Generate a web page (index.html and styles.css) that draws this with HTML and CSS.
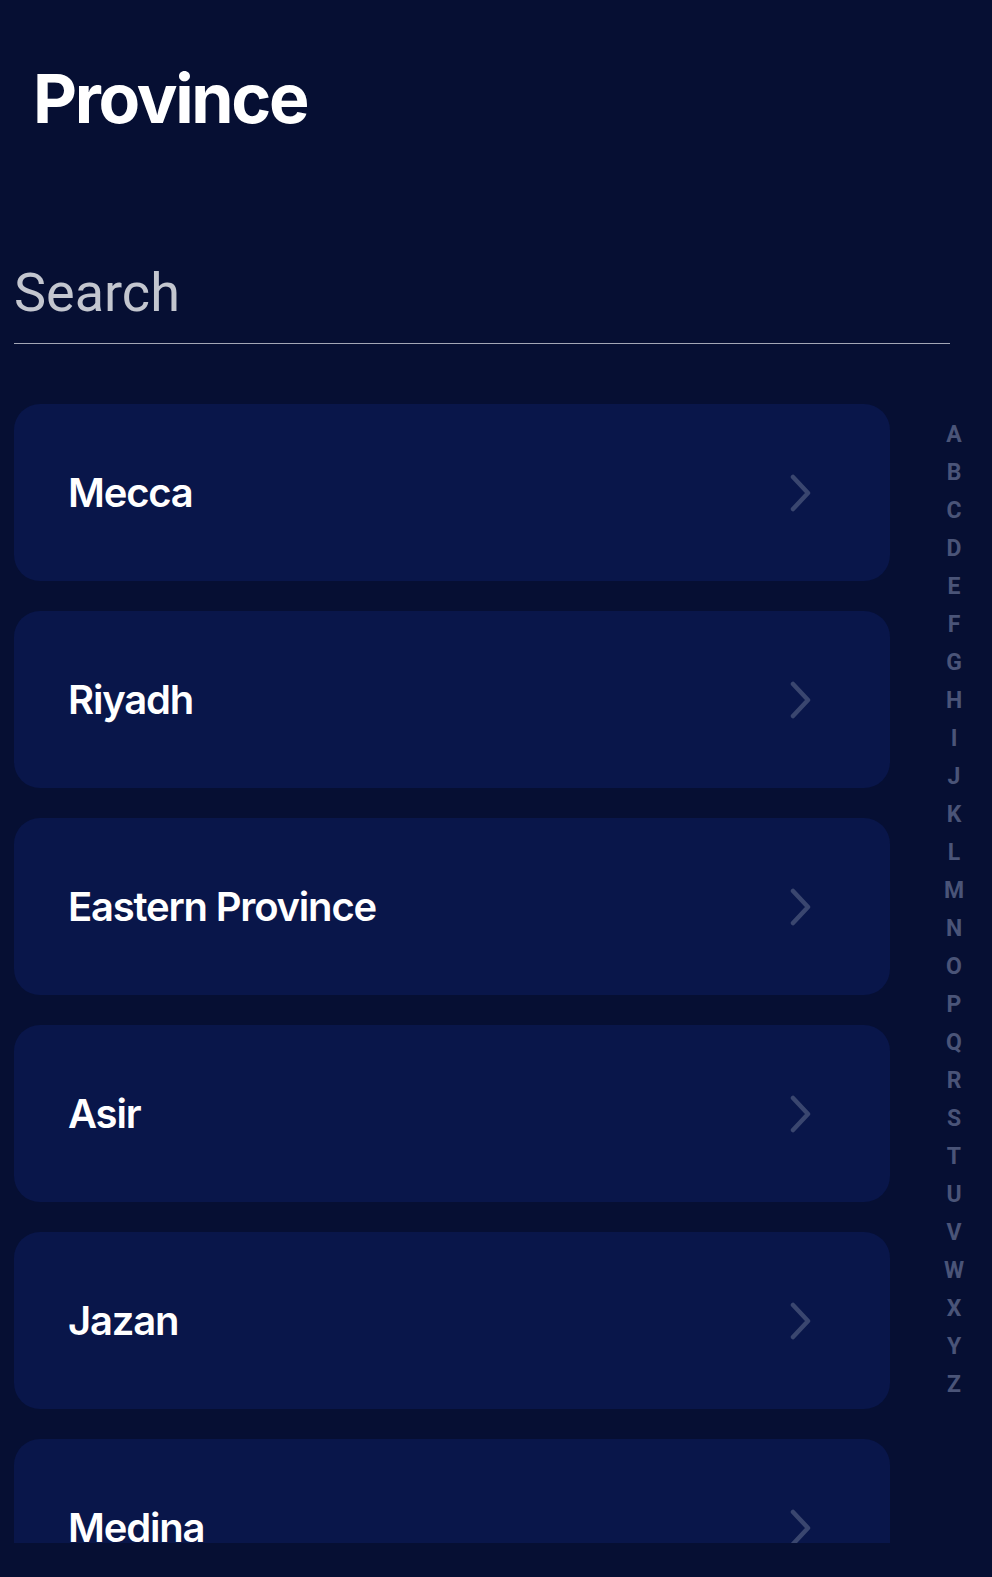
FILE: index.html
```html
<!DOCTYPE html>
<html lang="en">
<head>
<meta charset="utf-8">
<title>Province</title>
<link rel="stylesheet" href="styles.css">
</head>
<body>
<div class="page">
  <h1 class="title">Province</h1>
  <div class="search"><span class="search-placeholder">Search</span></div>
  <div class="content">
    <div class="list">
      <div class="card"><span class="card-name">Mecca</span><svg class="chev" width="24" height="38" viewBox="0 0 24 38"><path d="M4 3 L19 19 L4 35" fill="none" stroke="#3a466f" stroke-width="4.5" stroke-linecap="round" stroke-linejoin="round"/></svg></div>
      <div class="card"><span class="card-name">Riyadh</span><svg class="chev" width="24" height="38" viewBox="0 0 24 38"><path d="M4 3 L19 19 L4 35" fill="none" stroke="#3a466f" stroke-width="4.5" stroke-linecap="round" stroke-linejoin="round"/></svg></div>
      <div class="card"><span class="card-name">Eastern Province</span><svg class="chev" width="24" height="38" viewBox="0 0 24 38"><path d="M4 3 L19 19 L4 35" fill="none" stroke="#3a466f" stroke-width="4.5" stroke-linecap="round" stroke-linejoin="round"/></svg></div>
      <div class="card"><span class="card-name">Asir</span><svg class="chev" width="24" height="38" viewBox="0 0 24 38"><path d="M4 3 L19 19 L4 35" fill="none" stroke="#3a466f" stroke-width="4.5" stroke-linecap="round" stroke-linejoin="round"/></svg></div>
      <div class="card"><span class="card-name">Jazan</span><svg class="chev" width="24" height="38" viewBox="0 0 24 38"><path d="M4 3 L19 19 L4 35" fill="none" stroke="#3a466f" stroke-width="4.5" stroke-linecap="round" stroke-linejoin="round"/></svg></div>
      <div class="card"><span class="card-name">Medina</span><svg class="chev" width="24" height="38" viewBox="0 0 24 38"><path d="M4 3 L19 19 L4 35" fill="none" stroke="#3a466f" stroke-width="4.5" stroke-linecap="round" stroke-linejoin="round"/></svg></div>
    </div>
    <div class="index">
      <span>A</span><span>B</span><span>C</span><span>D</span><span>E</span><span>F</span><span>G</span><span>H</span><span>I</span><span>J</span><span>K</span><span>L</span><span>M</span><span>N</span><span>O</span><span>P</span><span>Q</span><span>R</span><span>S</span><span>T</span><span>U</span><span>V</span><span>W</span><span>X</span><span>Y</span><span>Z</span>
    </div>
  </div>
</div>
</body>
</html>
```
FILE: styles.css
```css
html, body {
  margin: 0;
  padding: 0;
  background: #060f33;
}
body {
  font-family: Inter, "Noto Sans", sans-serif;
  color: #ffffff;
  width: 992px;
  height: 1577px;
  overflow: hidden;
}
.page {
  display: flex;
  flex-direction: column;
}
.title {
  margin: 57px 0 0 33px;
  font-family: Inter, sans-serif;
  font-weight: 700;
  font-size: 68px;
  line-height: 82px;
  letter-spacing: -2.3px;
  color: #ffffff;
}
.search {
  margin: 122px 0 0 14px;
  width: 936px;
  padding-bottom: 19px;
  border-bottom: 1px solid #a3a7b6;
}
.search-placeholder {
  display: block;
  font-family: Roboto, sans-serif;
  font-weight: 400;
  font-size: 54px;
  line-height: 63px;
  color: #c3c6cf;
}
.content {
  display: flex;
  margin-top: 60px;
}
.list {
  margin-left: 14px;
  width: 876px;
  height: 1139px;
  overflow: hidden;
  display: flex;
  flex-direction: column;
  gap: 30px;
}
.card {
  flex: none;
  height: 177px;
  border-radius: 26px;
  background: #09164a;
  display: flex;
  align-items: center;
  justify-content: space-between;
  padding: 0 77px 0 54px;
}
.card-name {
  font-family: Inter, sans-serif;
  font-weight: 600;
  font-size: 40px;
  letter-spacing: -1.2px;
  color: #ffffff;
}
.chev {
  display: block;
}
.index {
  display: flex;
  flex-direction: column;
  align-items: center;
  width: 60px;
  margin-left: 34px;
  padding-top: 12px;
}
.index span {
  font-family: Roboto, sans-serif;
  font-weight: 700;
  font-size: 23px;
  line-height: 38px;
  color: #4a5478;
}
```
